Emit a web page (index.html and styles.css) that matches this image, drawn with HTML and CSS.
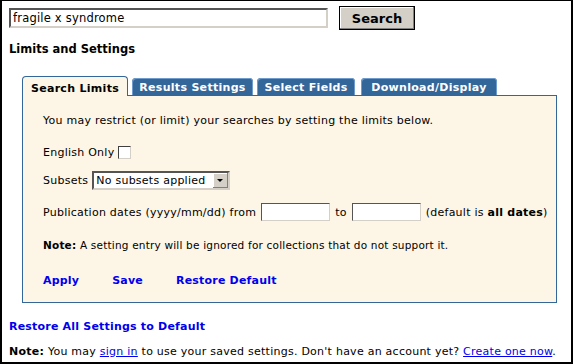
FILE: index.html
```html
<!DOCTYPE html>
<html lang="en">
<head>
  <meta charset="UTF-8" />
  <title>Limits and Settings</title>
  <link rel="stylesheet" href="styles.css">
</head>
<body>
  <div class="frame">
    <form class="search-bar">
      <input class="search-input" type="text" value="fragile x syndrome" />
      <button class="search-btn" type="button">Search</button>
    </form>

    <h1 class="page-title">Limits and Settings</h1>

    <div class="tabs">
      <span class="tab active tab-limits">Search Limits</span>
      <span class="tab tab-results">Results Settings</span>
      <span class="tab tab-fields">Select Fields</span>
      <span class="tab tab-download">Download/Display</span>
    </div>

    <div class="panel">
      <p class="intro">You may restrict (or limit) your searches by setting the limits below.</p>

      <div class="row row-english">
        English Only <span class="checkbox"></span>
      </div>

      <div class="row row-subsets">
        Subsets
        <span class="select">
          <span class="select-text">No subsets applied</span>
          <span class="select-arrow"></span>
        </span>
      </div>

      <div class="row row-dates">
        <span>Publication dates (yyyy/mm/dd) from</span>
        <span class="date-box"></span>
        <span>to</span>
        <span class="date-box"></span>
        <span>(default is <b>all dates</b>)</span>
      </div>

      <p class="note"><b>Note:</b> A setting entry will be ignored for collections that do not support it.</p>

      <div class="actions">
        <a href="#">Apply</a>
        <a href="#">Save</a>
        <a href="#">Restore Default</a>
      </div>
    </div>

    <a class="restore-all" href="#">Restore All Settings to Default</a>

    <p class="footer-note"><b>Note:</b> You may <a href="#">sign in</a> to use your saved settings. Don't have an account yet? <a href="#">Create one now</a>.</p>
  </div>
</body>
</html>
```

FILE: styles.css
```css
* {
  box-sizing: border-box;
}

html, body {
  margin: 0;
  height: 100%;
}

body {
  font-family: 'DejaVu Sans', Verdana, sans-serif;
  font-size: 11px;
  letter-spacing: 0.25px;
  color: #000;
  background: #fff;
}

.frame {
  height: 364px;
  border-top: 1px solid #000;
  border-left: 2px solid #000;
  border-right: 2px solid #000;
  border-bottom: 2px solid #000;
  padding: 5px 0 0 7px;
}

.search-bar {
  display: flex;
  align-items: center;
  margin: 0;
}

.search-input {
  width: 319px;
  height: 20px;
  padding: 0 2px;
  font-family: 'DejaVu Sans', Verdana, sans-serif;
  font-size: 11.5px;
  letter-spacing: 0.2px;
  border: 2px solid;
  border-color: #555 #d4d0c8 #d4d0c8 #555;
  outline: 0;
}

.search-btn {
  margin-left: 11px;
  width: 76px;
  height: 24px;
  background: #d4d0c8;
  border: 1px solid #000;
  box-shadow: inset -1px -1px 0 #808080, inset 1px 1px 0 #fff;
  font-family: 'DejaVu Sans', Verdana, sans-serif;
  font-weight: bold;
  font-size: 13px;
  padding: 0;
}

.page-title {
  margin: 12px 0 0;
  font-size: 11.5px;
  font-weight: bold;
  letter-spacing: 0;
}

.tabs {
  display: flex;
  align-items: flex-end;
  gap: 4px;
  margin: 20px 0 0 13px;
  height: 19px;
}

.tab {
  display: block;
  height: 17px;
  padding-top: 3px;
  text-align: center;
  background: #336699;
  color: #fff;
  font-weight: bold;
  border-radius: 4px 4px 0 0;
  box-shadow: inset 1px 1px 0 #6f9ccc, inset -1px 0 0 #6f9ccc;
  letter-spacing: 0.3px;
  white-space: nowrap;
}

.tab-limits { width: 106px; }
.tab-results { width: 121px; }
.tab-fields { width: 98px; }
.tab-download { width: 136px; margin-left: 2px; }

.tab.active {
  height: 20px;
  padding-top: 5px;
  background: #fdf5e6;
  color: #000;
  border: 1px solid #336699;
  border-bottom: 0;
  box-shadow: none;
  position: relative;
  top: 1px;
}

.panel {
  width: 535px;
  margin-left: 13px;
  height: 208px;
  background: #fdf5e6;
  border: 1px solid #336699;
  padding: 0 6px 0 20px;
}

.intro {
  margin: 18px 0 0;
}

.row {
  display: flex;
  align-items: center;
  gap: 5px;
  white-space: nowrap;
}

.row-english {
  margin-top: 19px;
  gap: 4px;
}

.row-subsets {
  margin-top: 12px;
  gap: 4px;
}

.row-dates {
  margin-top: 13px;
}

.checkbox {
  display: inline-block;
  width: 13px;
  height: 13px;
  background: #fff;
  border: 1px solid;
  border-color: #404040 #d4d0c8 #d4d0c8 #404040;
}

.select {
  display: flex;
  align-items: center;
  width: 138px;
  height: 19px;
  background: #fff;
  border: 2px solid;
  border-color: #555 #d4d0c8 #d4d0c8 #555;
  padding-left: 2px;
}

.select-text {
  flex: 1;
}

.select-arrow {
  width: 15px;
  height: 15px;
  background: #d4d0c8;
  box-shadow: inset -1px -1px 0 #808080, inset 1px 1px 0 #fff;
  position: relative;
}

.select-arrow::after {
  content: "";
  position: absolute;
  left: 4px;
  top: 6px;
  border: 3px solid transparent;
  border-top: 3px solid #000;
  border-bottom: 0;
}

.date-box {
  display: inline-block;
  width: 69px;
  height: 18px;
  background: #fff;
  border: 1px solid;
  border-color: #555 #d4d0c8 #d4d0c8 #555;
}

.note {
  margin: 18px 0 0;
  font-size: 10.5px;
  letter-spacing: 0.2px;
}

.actions {
  display: flex;
  gap: 33px;
  margin-top: 23px;
}

.actions a,
.restore-all {
  color: #0000ee;
  font-weight: bold;
  font-size: 11px;
  text-decoration: none;
  letter-spacing: 0.2px;
}

.restore-all {
  display: block;
  margin-top: 17px;
}

.footer-note {
  margin: 12px 0 0;
}

.footer-note a {
  color: #0000ee;
}
```
